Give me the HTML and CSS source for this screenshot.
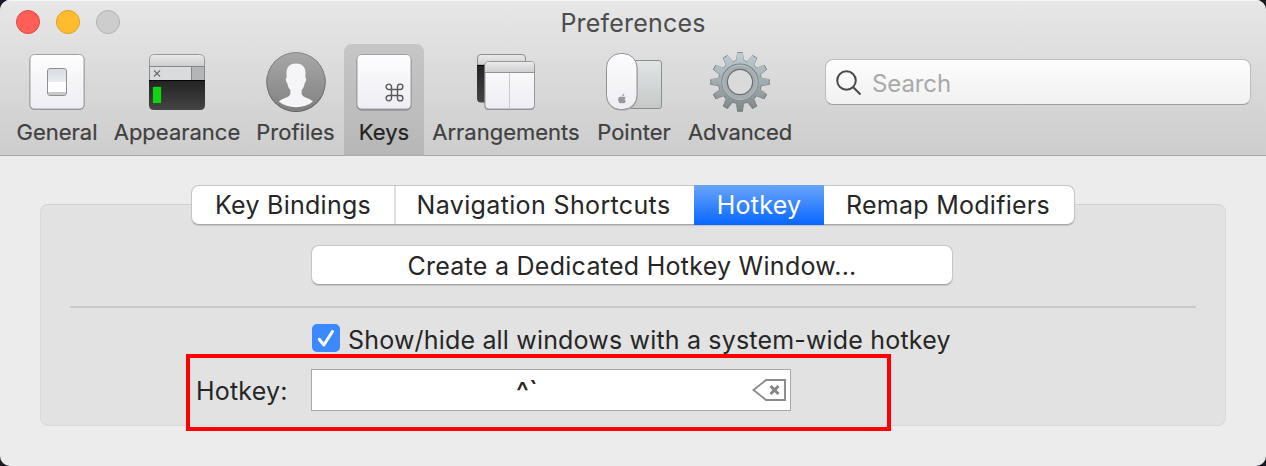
FILE: index.html
```html
<!DOCTYPE html>
<html lang="en">
<head>
<meta charset="utf-8">
<title>Preferences</title>
<link rel="stylesheet" href="styles.css">
</head>
<body>
<div class="window">
  <header class="chrome">
    <div class="titlebar">
      <div class="lights"><span class="light close"></span><span class="light minimize"></span><span class="light disabled"></span></div>
      <h1 class="title">Preferences</h1>
    </div>
    <div class="toolbar">
      <nav class="items">
        <a class="item general">
          <svg class="icon" viewBox="0 0 60 60">
            <defs>
              <linearGradient id="white" x2="0" y2="1"><stop offset="0" stop-color="#fdfdfe"/><stop offset="1" stop-color="#ededf3"/></linearGradient>
              <linearGradient id="bar" x2="0" y2="1"><stop offset="0" stop-color="#ebebec"/><stop offset="1" stop-color="#cfcfd1"/></linearGradient>
              <linearGradient id="dark" x2="0" y2="1"><stop offset="0" stop-color="#222"/><stop offset="1" stop-color="#454545"/></linearGradient>
              <linearGradient id="switch" x2="0" y2="1"><stop offset="0" stop-color="#d9dce0"/><stop offset="1" stop-color="#e9ecf0"/></linearGradient>
            </defs>
            <rect x="2.5" y="3" width="55" height="55" rx="5" fill="#8e8e92"/>
            <rect x="3" y="2.5" width="54" height="54.5" rx="4.5" fill="url(#white)" stroke="#a2a2a6"/>
            <rect x="20.500" y="16.500" width="19" height="27" rx="2.500" fill="#fff"/>
            <path d="M21 30V19q0-2 2-2h14q2 0 2 2v11z" fill="url(#switch)"/>
            <path d="M21 40h18v1q0 2-2 2H23q-2 0-2-2z" fill="#c8c9c8"/>
            <rect x="20.500" y="16.500" width="19" height="27" rx="2.500" fill="none" stroke="#8d8f92"/>
          </svg>
          <span class="label">General</span>
        </a>
        <a class="item appearance">
          <svg class="icon" viewBox="0 0 60 60">
            <path d="M2 14V7q0-5 5-5h46q5 0 5 5v7z" fill="url(#bar)"/>
            <path d="M2.5 14V7.5q0-5 5-5h45q5 0 5 5V14" fill="none" stroke="#96989a"/>
            <path d="M2 14h43v14H2z" fill="#dadbdd"/><path d="M44.500 14H58v14H44.500z" fill="#b4b5b7"/>
            <path d="M2 14.500h56M2.500 14v14M44.500 14v14M57.500 14v14" stroke="#86888a" fill="none"/>
            <path d="M2 28h56v25q0 5-5 5H7q-5 0-5-5z" fill="url(#dark)"/><path d="M2 28.500h56" stroke="#050505"/>
            <path d="M7 18.500l6 6M13 18.500l-6 6" stroke="#6d6e70" stroke-width="1.200"/>
            <rect x="5" y="34" width="10" height="18" rx="2" fill="#0b6e12" opacity=".45"/>
            <rect x="6" y="35" width="8" height="16" fill="#13d313"/>
          </svg>
          <span class="label">Appearance</span>
        </a>
        <a class="item profiles">
          <svg class="icon" viewBox="0 0 60 60">
            <defs><linearGradient id="disc" x2="0" y2="1"><stop offset="0" stop-color="#a8a8a8"/><stop offset="1" stop-color="#818181"/></linearGradient></defs>
            <circle cx="30" cy="30.300" r="29.600" fill="#555"/>
            <circle cx="30" cy="29.700" r="29.200" fill="url(#disc)" stroke="#7c7c7c" stroke-width=".8"/>
            <path d="M30 11.500c6.500 0 9.800 4 9.500 10l-.2 4c1.700.2.500 5-.6 5.600-.4 3.300-1.500 5.300-3 7-.3 3.200-.2 5.200 1.800 6.300 3.500 1.900 7.300 2.500 9.500 5.200-4.500 3.700-10.500 5.700-17 5.700s-12.700-2-17.200-5.700c2.400-2.700 6.200-3.300 9.700-5.200 2-1.100 2.100-3.100 1.800-6.300-1.500-1.700-2.600-3.700-3-7-1.200-.6-2.300-5.400-.6-5.600l-.2-4c-.3-6 3-10 9.500-10z" fill="#f5f5f7"/>
          </svg>
          <span class="label">Profiles</span>
        </a>
        <a class="item keys">
          <svg class="icon" viewBox="0 0 60 60">
            <rect x="2.500" y="4" width="55" height="54.500" rx="5" fill="#828286"/>
            <rect x="3" y="2.500" width="54" height="54.500" rx="4.500" fill="url(#white)" stroke="#a2a2a6"/>
            <path d="M37.500 37.500h6v6h-6zM37.500 37.500h-2.600a2.700 2.700 0 1 1 2.600-2.700zM43.500 37.500v-2.700a2.700 2.700 0 1 1 2.700 2.700zM43.500 43.500h2.700a2.700 2.700 0 1 1-2.700 2.700zM37.500 43.500v2.700a2.700 2.700 0 1 1-2.600-2.700z" fill="none" stroke="#58585a" stroke-width="1.400"/>
          </svg>
          <span class="label">Keys</span>
        </a>
        <a class="item arrangements">
          <svg class="icon" viewBox="0 0 60 60">
            <path d="M1 12h10v38.500H5q-4 0-4-4z" fill="url(#dark)"/>
            <path d="M1.500 13V6q0-3.500 3.500-3.500h41q3.500 0 3.500 3.500v7z" fill="url(#bar)" stroke="#8c8d90"/>
            <path d="M1 13.500h8" stroke="#050505"/>
            <rect x="8.500" y="10" width="50" height="48" rx="4" fill="#8e8e92"/>
            <rect x="9" y="9.500" width="49.500" height="47.500" rx="3.500" fill="url(#white)" stroke="#98999c"/>
            <path d="M9.500 20v-7q0-3 3-3H55q3 0 3 3v7z" fill="url(#bar)"/>
            <path d="M9 20.500h49" stroke="#919296"/><path d="M33.500 21v36" stroke="#cacace"/>
          </svg>
          <span class="label">Arrangements</span>
        </a>
        <a class="item pointer">
          <svg class="icon" viewBox="0 0 60 60">
            <defs><linearGradient id="pad" x2="0" y2="1"><stop offset="0" stop-color="#e0e5e5"/><stop offset="1" stop-color="#c5c8c7"/></linearGradient></defs>
            <rect x="24.500" y="8.500" width="33" height="48" rx="2.500" fill="url(#pad)" stroke="#8c8e8e"/>
            <rect x="2.500" y="2.500" width="31" height="56" rx="14" fill="#a6a6aa"/>
            <rect x="2.500" y="1.500" width="30.500" height="56" rx="14" fill="url(#white)" stroke="#929296"/>
            <path transform="translate(2.600 6.200) scale(.87)" d="M19 44.500c-1.500-.6-2.500 0-3-.1-2.100 0-3.100 1.800-2.700 3.600.4 2.200 1.500 3.900 2.700 3.900.7 0 1-.5 1.900-.5s1.200.5 1.900.4c1.200-.1 2-1.700 2.300-2.700-1.700-.8-1.700-3.100-.1-3.900-.8-1-2-1.200-3-.7zM18 43.800c0-1.700.8-2.700 2.400-3 .1 1.700-.9 2.800-2.400 3z" fill="#9a9a9d"/>
          </svg>
          <span class="label">Pointer</span>
        </a>
        <a class="item advanced">
          <svg class="icon" viewBox="0 0 60 60">
            <defs>
              <linearGradient id="metal" x2="0" y1="0" y2="60" gradientUnits="userSpaceOnUse"><stop offset="0" stop-color="#bfced3"/><stop offset=".5" stop-color="#a2acb0"/><stop offset="1" stop-color="#7f8688"/></linearGradient>
              <clipPath id="teeth">
                <path id="tooth" d="M27.200 .3h5.600l1.300 9.200h-8.200z"/>
                <use href="#tooth" transform="rotate(30 30 30)"/><use href="#tooth" transform="rotate(60 30 30)"/><use href="#tooth" transform="rotate(90 30 30)"/><use href="#tooth" transform="rotate(120 30 30)"/><use href="#tooth" transform="rotate(150 30 30)"/><use href="#tooth" transform="rotate(180 30 30)"/><use href="#tooth" transform="rotate(210 30 30)"/><use href="#tooth" transform="rotate(240 30 30)"/><use href="#tooth" transform="rotate(270 30 30)"/><use href="#tooth" transform="rotate(300 30 30)"/><use href="#tooth" transform="rotate(330 30 30)"/>
                <circle cx="30" cy="30" r="22"/>
              </clipPath>
            </defs>
            <rect width="60" height="60" fill="#70787b" clip-path="url(#teeth)"/>
            <g transform="translate(.9 .7) scale(.97)"><rect width="60" height="60" fill="url(#metal)" clip-path="url(#teeth)"/></g>
            <circle cx="30" cy="30" r="18" fill="#a5adb0" stroke="#7e8689" stroke-width="1.200"/>
            <circle cx="30" cy="30.500" r="17.200" fill="none" stroke="#bdc5c8" stroke-width=".8"/>
            <circle cx="30" cy="30" r="12.600" fill="#dadada" stroke="#667074" stroke-width="1.200"/>
          </svg>
          <span class="label">Advanced</span>
        </a>
      </nav>
      <div class="search">
        <svg class="magnifier" viewBox="0 0 26 26"><circle cx="10.500" cy="10.500" r="9.300"/><path d="M17.200 17.200l7.300 7.300"/></svg>
        <span class="placeholder">Search</span>
      </div>
    </div>
  </header>
  <main class="content">
    <div class="tabs">
      <div class="tab bindings">Key Bindings</div>
      <div class="tab navigation">Navigation Shortcuts</div>
      <div class="tab hotkey">Hotkey</div>
      <div class="tab remap">Remap Modifiers</div>
    </div>
    <section class="panel">
      <div class="create">Create a Dedicated Hotkey Window...</div>
      <div class="separator"></div>
      <div class="option">
        <svg class="check" viewBox="0 0 28 28"><rect width="28" height="28" rx="5" fill="#3b89fd"/><path d="M7.300 15.300l4.500 5.700L20.500 7.500" fill="none" stroke="#fff" stroke-width="3" stroke-linecap="round" stroke-linejoin="round"/></svg>
        <span class="option-label">Show/hide all windows with a system-wide hotkey</span>
      </div>
      <div class="shortcut">
        <span class="shortcut-label">Hotkey:</span>
        <div class="field">
          <span class="combo">^`</span>
          <svg class="clear" viewBox="0 0 34 22"><path d="M1.500 11L14 1h19v20H14z" fill="none" stroke="#8b8b8b" stroke-width="1.900"/><path d="M18.500 7l8 8M26.500 7l-8 8" stroke="#858585" stroke-width="3"/></svg>
        </div>
      </div>
    </section>
  </main>
</div>
</body>
</html>
```
FILE: styles.css
```css
* { box-sizing: border-box; }
body {
  margin: 0;
  background: #191a24;
  font-family: Inter, "Liberation Sans", sans-serif;
  color: #262626;
}
.window {
  width: 1266px;
  height: 466px;
  border-radius: 10px;
  overflow: hidden;
  background: #ececec;
}
.chrome {
  height: 156px;
  background: linear-gradient(#e7e7e7, #cdcdcd);
  border-bottom: 1px solid #a9a9a9;
  box-shadow: inset 0 1px #f6f6f6;
}
.titlebar {
  display: grid;
  grid-template-columns: 200px 1fr 200px;
  height: 44px;
}
.lights { display: flex; gap: 16px; padding: 10px 0 0 16px; }
.light { width: 24px; height: 24px; border-radius: 50%; border: 1px solid; }
.close { background: #ff5f57; border-color: #e2463f; }
.minimize { background: #ffbd2e; border-color: #e09f1f; }
.disabled { background: #cdcdcd; border-color: #b1b1b1; }
.title {
  margin: 0;
  font-size: 25px;
  font-weight: 400;
  line-height: 46px;
  letter-spacing: .2px;
  text-align: center;
  color: #4c4c4c;
}
.toolbar { display: flex; height: 111px; }
.items { display: flex; padding-left: 9px; width: 800px; }
.item {
  display: flex;
  flex-direction: column;
  align-items: center;
  padding-top: 8px;
  white-space: nowrap;
}
.icon { width: 60px; height: 60px; flex: none; }
.label { margin-top: 6px; font-size: 22px; line-height: 28px; color: #404040; -webkit-text-stroke: .2px #404040; }
.general { width: 96px; }
.appearance { width: 144px; }
.profiles { width: 93px; }
.keys { width: 80px; margin-left: 2px; border-radius: 8px 8px 0 0; background: linear-gradient(#c6c6c6, #b7b7b7); }
.keys .label { color: #222; -webkit-text-stroke-color: #222; }
.arrangements { width: 164px; }
.pointer { width: 92px; }
.advanced { width: 120px; }
.advanced .label { letter-spacing: -.15px; }
.search {
  display: flex;
  align-items: center;
  gap: 10px;
  width: 426px;
  height: 46px;
  margin: 15px 0 0 25px;
  padding: 2px 0 0 10px;
  border: 1px solid #bdbdbd;
  border-bottom-color: #9d9d9d;
  border-radius: 8px;
  background: linear-gradient(#fdfdfd, #f1f1f1);
  font-size: 24px;
  color: #a9a9a9;
}
.placeholder { padding-top: 1px; letter-spacing: -.1px; }
.magnifier { width: 26px; height: 26px; fill: none; stroke: #4a4a4a; stroke-width: 2; }
.content { padding: 29px 40px 0; font-size: 25px; white-space: nowrap; }
.tabs {
  position: relative;
  display: flex;
  width: 884px;
  height: 40px;
  margin-left: 151px;
  border: 1px solid #c6c6c6;
  border-bottom-color: #a8a8a8;
  border-radius: 8px;
  background: #fff;
  box-shadow: 0 1px 1px #0002;
  line-height: 39px;
  letter-spacing: .27px;
  text-align: center;
}
.bindings { width: 204px; border-right: 2px solid #e0e0e0; }
.navigation { width: 298px; padding-right: 3px; letter-spacing: .36px; }
.hotkey { width: 130px; height: 40px; margin-top: -1px; background: linear-gradient(#6aa5fb, #0766ff); color: #fff; line-height: 41px; }
.remap { width: 250px; padding-right: 2px; }
.panel {
  height: 222px;
  margin-top: -21px;
  padding: 40px 29px 0;
  border: 1px solid #d9d9d9;
  border-top-color: #d0d0d0;
  border-radius: 8px;
  background: #e2e2e2;
}
.create {
  width: 642px;
  height: 40px;
  margin-left: 241px;
  border: 1px solid #c6c6c6;
  border-bottom-color: #a5a5a5;
  border-radius: 8px;
  background: #fff;
  box-shadow: 0 1px 1px #0002;
  text-align: center;
  line-height: 40px;
  letter-spacing: .27px;
}
.separator { height: 2px; margin-top: 21px; background: #c9c9c9; }
.option { display: flex; align-items: center; gap: 8px; height: 32px; margin: 15px 0 0 242px; }
.option-label { padding-top: 2px; letter-spacing: .18px; }
.check { width: 28px; height: 28px; margin-top: -3px; flex: none; }
.shortcut {
  position: relative;
  display: flex;
  align-items: flex-start;
  width: 705px;
  height: 77px;
  margin: -1px 0 0 116px;
  border: 4px solid #fe0000;
  padding: 11px 0 0 6px;
}
.shortcut-label { width: 115px; line-height: 44px; letter-spacing: .2px; }
.field {
  display: flex;
  align-items: center;
  width: 480px;
  height: 42px;
  border: 1px solid #a8a8a8;
  background: #fff;
}
.combo { width: 435px; padding: 3px 0 0 204px; font-size: 27px; font-weight: 500; }
.clear { width: 34px; height: 22px; margin-left: 5px; flex: none; }
```
